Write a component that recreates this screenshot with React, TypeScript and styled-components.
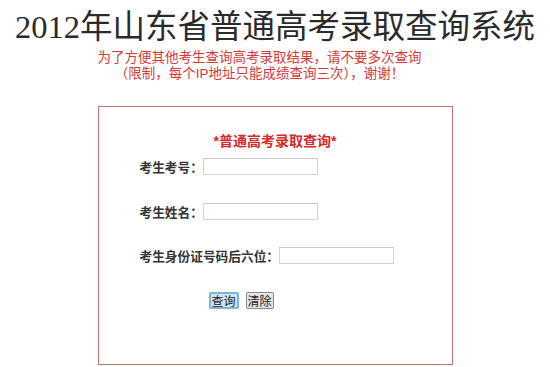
import React from "react";
import styled, { createGlobalStyle } from "styled-components";

const Global = createGlobalStyle`
  html, body { margin: 0; padding: 0; background: #fff; }
  body { font-family: "Liberation Sans", "Noto Sans CJK SC", sans-serif; }
`;

const Page = styled.div`
  width: 550px;
  display: flex;
  flex-direction: column;
  align-items: center;
`;

const Title = styled.h1`
  margin: 8px 0 0;
  font-family: "Liberation Serif", "Noto Sans CJK SC", serif;
  font-weight: 400;
  font-size: 32.5px;
  line-height: 38px;
  color: #2a2a2a;
  white-space: nowrap;
`;

const Notice = styled.p`
  margin: 4px 31px 0 0;
  font-size: 13.5px;
  line-height: 16px;
  color: #d23a3a;
  text-align: center;
  white-space: nowrap;
`;

const Box = styled.div`
  margin-top: 24px;
  width: 355px;
  height: 259px;
  border: 1.5px solid #c97070;
  box-sizing: border-box;
  display: flex;
  flex-direction: column;
`;

const Heading = styled.div`
  margin-top: 25px;
  text-align: center;
  font-size: 14px;
  font-weight: 700;
  line-height: 18px;
  color: #d42a2a;
`;

const Row = styled.div<{ $top: number }>`
  display: flex;
  align-items: center;
  padding-left: 41px;
  margin-top: ${(p) => p.$top}px;
  height: 18px;
`;

const Label = styled.span`
  font-size: 12.7px;
  font-weight: 700;
  color: #333;
  white-space: nowrap;
`;

const Input = styled.input`
  width: 115px;
  height: 17px;
  box-sizing: border-box;
  border: 1px solid #d4d4d4;
  border-top-color: #c8c8c8;
  background: #fff;
  padding: 0;
`;

const Buttons = styled.div`
  display: flex;
  gap: 7px;
  padding-left: 110px;
  margin-top: 28px;
`;

const Btn = styled.button<{ $primary?: boolean }>`
  height: 17px;
  padding: 0 1px;
  font-family: "Noto Sans CJK SC", sans-serif;
  font-size: 12px;
  line-height: 13px;
  color: #222;
  border-radius: 2px;
  border: ${(p) => (p.$primary ? "2px solid #7cb6d4" : "1px solid #8a8a8a")};
  background: ${(p) => (p.$primary ? "#cfe6f2" : "#e4e4e4")};
  box-sizing: border-box;
`;

export default function App() {
  return (
    <>
      <Global />
      <Page>
        <Title>2012年山东省普通高考录取查询系统</Title>
        <Notice>
          为了方便其他考生查询高考录取结果，请不要多次查询
          <br />
          （限制，每个IP地址只能成绩查询三次），谢谢！
        </Notice>
        <Box>
          <Heading>*普通高考录取查询*</Heading>
          <Row $top={7}>
            <Label>考生考号：</Label>
            <Input type="text" />
          </Row>
          <Row $top={27}>
            <Label>考生姓名：</Label>
            <Input type="text" />
          </Row>
          <Row $top={26}>
            <Label>考生身份证号码后六位：</Label>
            <Input type="text" />
          </Row>
          <Buttons>
            <Btn $primary>查询</Btn>
            <Btn>清除</Btn>
          </Buttons>
        </Box>
      </Page>
    </>
  );
}
